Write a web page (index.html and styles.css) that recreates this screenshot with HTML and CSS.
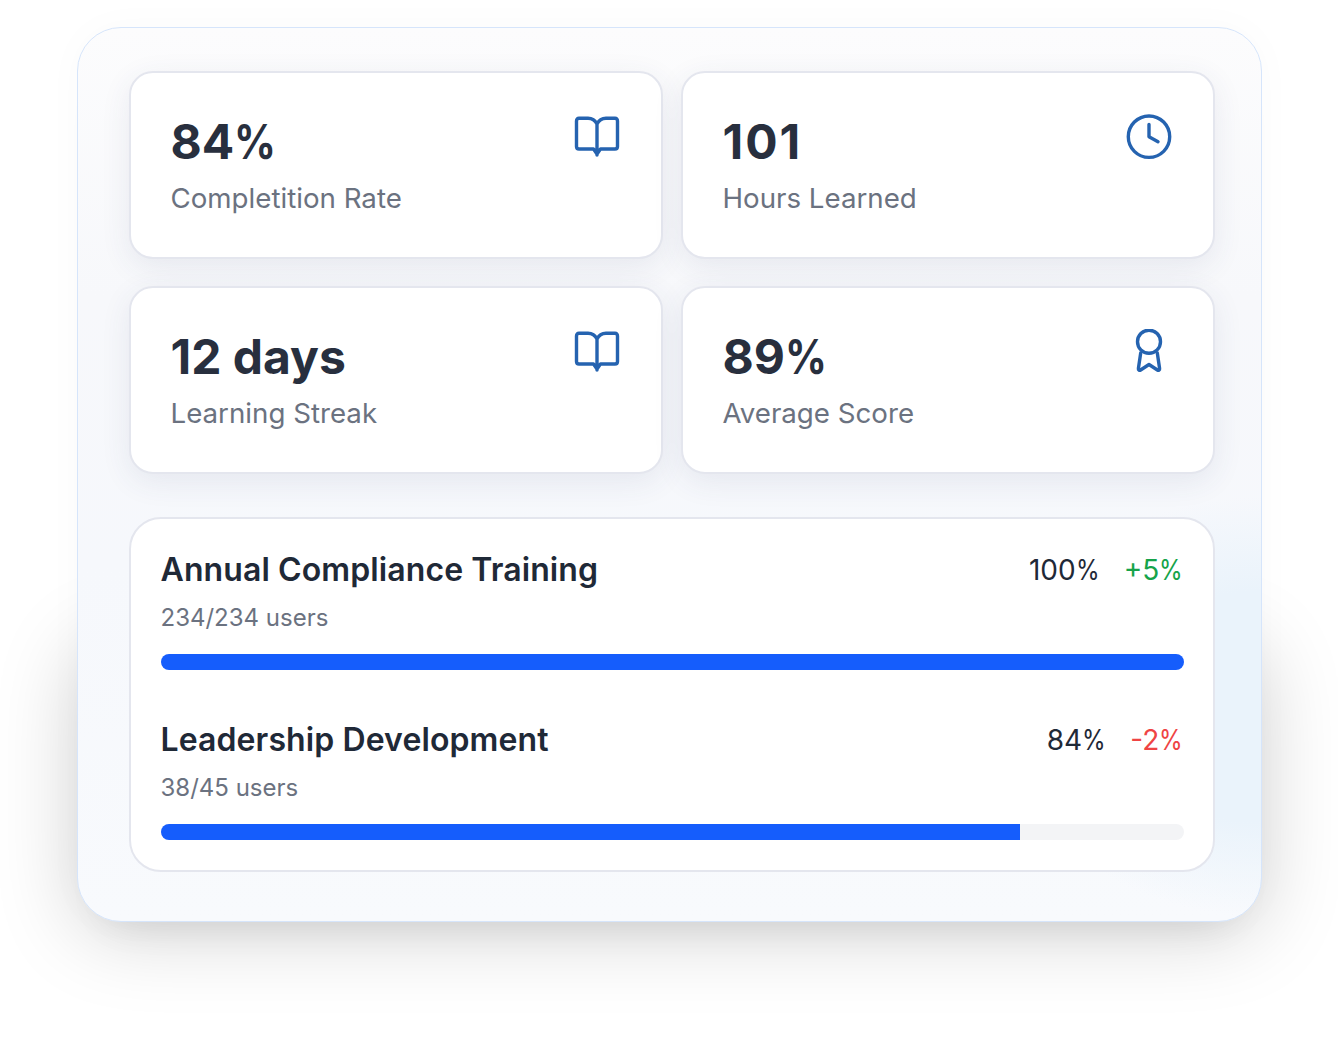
FILE: index.html
```html
<!DOCTYPE html>
<html lang="en">
<head>
    <meta charset="UTF-8">
    <title>Learning Dashboard</title>
    <link rel="stylesheet" href="styles.css">
</head>
<body>
    <div class="panel">
        <div class="stats">
            <div class="stat-card">
                <div>
                    <div class="stat-value">84<span class="pct">%</span></div>
                    <div class="stat-label">Completition Rate</div>
                </div>
                <svg class="stat-icon" viewBox="0 0 48 48"><path d="M24 10C22 6 19 4.3 15 4.3H6C4.5 4.3 3.5 5.3 3.5 7V32.5C3.5 34 4.5 35 6 35H20.5L24 40L27.5 35H42C43.5 35 44.5 34 44.5 32.5V7C44.5 5.3 43.5 4.3 42 4.3H33C29 4.3 26 6 24 10ZM24 10V41"/></svg>
            </div>
            <div class="stat-card">
                <div>
                    <div class="stat-value stat-value-wide">101</div>
                    <div class="stat-label">Hours Learned</div>
                </div>
                <svg class="stat-icon" viewBox="0 0 48 48"><circle cx="24" cy="22.7" r="20.7"/><path d="M24 10.5V22.7L33 27.7"/></svg>
            </div>
            <div class="stat-card">
                <div>
                    <div class="stat-value">12 days</div>
                    <div class="stat-label">Learning Streak</div>
                </div>
                <svg class="stat-icon" viewBox="0 0 48 48"><path d="M24 10C22 6 19 4.3 15 4.3H6C4.5 4.3 3.5 5.3 3.5 7V32.5C3.5 34 4.5 35 6 35H20.5L24 40L27.5 35H42C43.5 35 44.5 34 44.5 32.5V7C44.5 5.3 43.5 4.3 42 4.3H33C29 4.3 26 6 24 10ZM24 10V41"/></svg>
            </div>
            <div class="stat-card">
                <div>
                    <div class="stat-value">89<span class="pct">%</span></div>
                    <div class="stat-label">Average Score</div>
                </div>
                <svg class="stat-icon" viewBox="0 0 48 48"><circle cx="24" cy="12.7" r="11.5"/><path d="M15.7 24L13.4 39.5C13.2 41 14.4 41.8 15.6 41L24 35.5L32.4 41C33.6 41.8 34.8 41 34.6 39.5L32.3 24"/></svg>
            </div>
        </div>

        <div class="courses">
            <div class="course">
                <div class="course-head">
                    <div class="course-title">Annual Compliance Training</div>
                    <div class="course-nums">
                        <span>100<span class="pct">%</span></span>
                        <span class="up">+5<span class="pct">%</span></span>
                    </div>
                </div>
                <div class="course-users">234/234 users</div>
                <div class="bar"><div class="bar-fill" style="width: 100%"></div></div>
            </div>
            <div class="course">
                <div class="course-head">
                    <div class="course-title">Leadership Development</div>
                    <div class="course-nums">
                        <span>84<span class="pct">%</span></span>
                        <span class="down">-2<span class="pct">%</span></span>
                    </div>
                </div>
                <div class="course-users">38/45 users</div>
                <div class="bar"><div class="bar-fill" style="width: 84%"></div></div>
            </div>
        </div>
    </div>
</body>
</html>
```
FILE: styles.css
```css
html, body {
    height: 100%;
}
body {
    margin: 0;
    background-color: #fff;
    font-family: Inter, "Liberation Sans", sans-serif;
    color: #1f2937;
    overflow: hidden;
}
.panel {
    position: relative;
    box-sizing: border-box;
    width: 1185px;
    height: 895px;
    margin: 27px 0 0 76.5px;
    padding: 42.5px 46px 0 51px;
    border: 1.5px solid #d6e5fb;
    border-radius: 44px;
    background:
        radial-gradient(ellipse 260px 210px at 100% 76%, #eaf3fb 0%, #eaf3fb 55%, rgba(234, 243, 251, 0) 100%),
        linear-gradient(180deg, #fcfcfd 0%, #f7f8fb 30%, #f6f8fc 60%, #f8fafd 100%);
    box-shadow: 0 0 40px rgba(0, 0, 0, 0.025), 0 30px 40px -30px rgba(0, 0, 0, 0.08);
}
.panel::before {
    content: "";
    position: absolute;
    z-index: -1;
    left: 0;
    right: 0;
    top: 68%;
    bottom: 0;
    border-radius: 44px;
    box-shadow: 0 10px 80px 5px rgba(0, 0, 0, 0.17);
}
.pct {
    display: inline-block;
    margin-right: -0.12em;
    transform: scaleX(0.86);
    transform-origin: left;
}
.stats {
    display: grid;
    grid-template-columns: 534px 534px;
    grid-template-rows: 188px 187.5px;
    gap: 27.5px 18px;
    margin-bottom: 43px;
}
.stat-card {
    box-sizing: border-box;
    display: flex;
    justify-content: space-between;
    align-items: flex-start;
    padding: 41px 40px 0 40px;
    background: #fff;
    border: 2px solid #e4e6ee;
    border-radius: 24px;
    box-shadow: 0 8px 30px rgba(60, 70, 110, 0.09);
}
.stat-value {
    font-size: 48px;
    line-height: 56px;
    font-weight: 700;
    color: #282f3e;
}
.stat-value-wide {
    letter-spacing: 2px;
}
.stat-label {
    margin-top: 10px;
    font-size: 27.7px;
    line-height: 36px;
    color: #6b7280;
}
.stat-icon {
    width: 48px;
    height: 48px;
    fill: none;
    stroke: #2563b0;
    stroke-width: 3.4;
    stroke-linecap: round;
    stroke-linejoin: round;
}
.courses {
    box-sizing: border-box;
    height: 355px;
    width: 1086px;
    padding: 29px 29px 0 30px;
    background: #fff;
    border: 2px solid #e4e6ee;
    border-radius: 32px;
}
.course {
    margin-bottom: 48px;
}
.course-head {
    display: flex;
    justify-content: space-between;
    align-items: center;
    height: 44px;
}
.course-title {
    font-size: 32px;
    font-weight: 600;
    letter-spacing: 0.1px;
    color: #1f2937;
}
.course-nums {
    display: flex;
    gap: 24px;
    font-size: 28px;
}
.up {
    color: #16a34a;
}
.down {
    color: #ef4444;
}
.course-users {
    margin-top: 8px;
    font-size: 24px;
    line-height: 36px;
    color: #6b7280;
}
.bar {
    height: 16px;
    margin-top: 18px;
    background: #f3f4f6;
    border-radius: 8px;
    overflow: hidden;
}
.bar-fill {
    height: 100%;
    background: #155dfc;
}
```
